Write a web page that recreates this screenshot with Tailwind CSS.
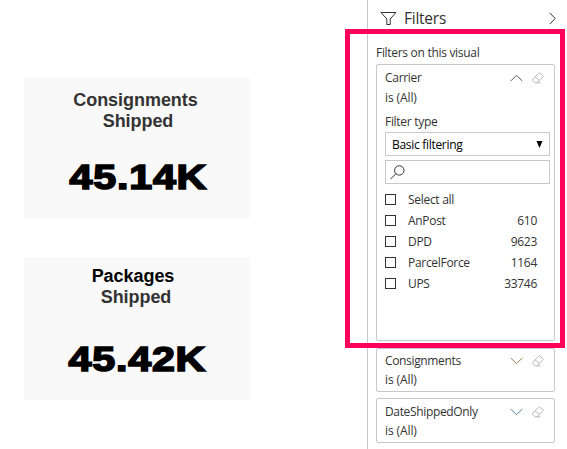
<!DOCTYPE html>
<html lang="en">
<head>
<meta charset="utf-8">
<title>Filters</title>
<script src="https://cdn.jsdelivr.net/npm/@tailwindcss/browser@4"></script>
</head>
<body class="bg-white">
<svg class="hidden">
  <symbol id="eraser" viewBox="0 0 12 12"><path d="M.7 7.3 7.4.7 11.4 4.4 4.9 10.9H3.1L.7 8.6ZM3.2 4.9 7.4 8.6M4.9 10.9H8.6" fill="none" stroke="#a8a6a5" stroke-width=".8" stroke-linejoin="round"/></symbol>
  <symbol id="down" viewBox="0 0 13 8"><path d="M.7 1 6.5 6.6 12.3 1" fill="none" stroke="currentColor" stroke-width="1"/></symbol>
</svg>
<div class="relative flex h-[449px] w-[567px] overflow-hidden bg-white">
  <main class="flex w-[367px] flex-col gap-[38px] pt-[77px] pl-6 font-['Liberation_Sans',Arial,sans-serif] font-bold">
    <section class="flex h-[142px] w-[226px] flex-col items-center bg-[#f9f9f9] pt-[13px] text-[18px] leading-[21px] tracking-[-0.05px] text-[#333]">
      <span class="mr-[3px]">Consignments</span>
      <span class="ml-[2px]">Shipped</span>
      <span class="mt-[25px] ml-[2px] origin-center scale-x-[1.16] text-[35.5px] leading-[40px] tracking-[0.7px] text-black [-webkit-text-stroke:1.7px_black]">45.14K</span>
    </section>
    <section class="flex h-[143px] w-[226px] flex-col items-center bg-[#f9f9f9] pt-[8px] text-[18px] leading-[21px] tracking-[-0.05px] text-[#333]">
      <span class="mt-px mr-[8px] text-black">Packages</span>
      <span class="mr-[2px]">Shipped</span>
      <span class="mt-[31px] ml-[1px] origin-center scale-x-[1.16] text-[35.5px] leading-[40px] tracking-[0.7px] text-black [-webkit-text-stroke:1.7px_black]">45.42K</span>
    </section>
  </main>
  <aside class="flex w-[200px] flex-col border-l border-[#c8c8c8] pr-3 pl-2 font-['Open_Sans','Noto_Sans',sans-serif] text-[12px] leading-[19px] tracking-[-0.3px] text-[#333]">
    <header class="flex h-[36px] shrink-0 items-center pl-[4px]">
      <svg class="h-[15px] w-[17px]" viewBox="0 0 17 15"><path d="M1 1.5H16L10.2 8V13.5H6.8V8Z" fill="none" stroke="#333"/></svg>
      <span class="ml-[7px] text-[15.5px] tracking-[-0.25px]">Filters</span>
      <svg class="ml-auto mr-[-1px] h-[13px] w-[7px]" viewBox="0 0 7 13"><path d="M.7.8 6.2 6.5.7 12.2" fill="none" stroke="#333"/></svg>
    </header>
    <h2 class="mt-[7px] mb-[2px] shrink-0 text-[12px] tracking-[-0.3px]">Filters on this visual</h2>
    <div class="flex w-[179px] shrink-0 flex-col gap-[7px]">
      <section class="h-[277px] rounded-[2px] border border-[#c8c8c8] px-2 pt-[3px]">
        <div class="flex h-[19px] items-center"><span>Carrier</span>
          <svg class="ml-auto h-2 w-[13px] rotate-180 text-[#555]"><use href="#down"/></svg>
          <svg class="mr-[2px] ml-[9px] size-3"><use href="#eraser"/></svg></div>
        <p class="mt-px tracking-[-0.1px]">is (All)</p>
        <p class="mt-[5px]">Filter type</p>
        <div class="mt-[1px] flex h-6 w-[165px] items-center border border-[#c8c8c8] px-[6px] text-black"><span>Basic filtering</span>
          <svg class="ml-auto h-[7px] w-[7px]" viewBox="0 0 7 7"><path d="M.5 0H6.5L3.5 7Z"/></svg></div>
        <div class="mt-1 flex h-6 w-[165px] items-center border border-[#c8c8c8] pl-1">
          <svg class="h-[15px] w-[15px]" viewBox="0 0 15 15"><path d="M.5 14 6 8.7" stroke="#333"/><circle cx="9.3" cy="5.4" r="4.7" fill="none" stroke="#333"/></svg></div>
        <ul class="mt-[5px] leading-[21px]">
          <li class="flex h-[21px] items-center"><i class="mr-3 size-[11px] border border-[#333]"></i>Select all</li>
          <li class="flex h-[21px] items-center"><i class="mr-3 size-[11px] border border-[#333]"></i>AnPost<b class="mr-[9px] ml-auto font-normal">610</b></li>
          <li class="flex h-[21px] items-center"><i class="mr-3 size-[11px] border border-[#333]"></i>DPD<b class="mr-[9px] ml-auto font-normal">9623</b></li>
          <li class="flex h-[21px] items-center"><i class="mr-3 size-[11px] border border-[#333]"></i>ParcelForce<b class="mr-[9px] ml-auto font-normal">1164</b></li>
          <li class="flex h-[21px] items-center"><i class="mr-3 size-[11px] border border-[#333]"></i>UPS<b class="mr-[9px] ml-auto font-normal">33746</b></li>
        </ul>
      </section>
      <section class="-mb-px h-[44px] rounded-[2px] border border-[#c8c8c8] px-2 pt-[2px]">
        <div class="flex h-[19px] items-center"><span class="tracking-[-0.35px]">Consignments</span>
          <svg class="ml-auto h-2 w-[13px] text-[#a67c50]"><use href="#down"/></svg>
          <svg class="mr-[2px] ml-[9px] size-3"><use href="#eraser"/></svg></div>
        <p class="tracking-[-0.1px]">is (All)</p>
      </section>
      <section class="h-[45px] rounded-[2px] border border-[#c8c8c8] px-2 pt-[3px]">
        <div class="flex h-[19px] items-center"><span class="tracking-[-0.35px]">DateShippedOnly</span>
          <svg class="ml-auto h-2 w-[13px] text-[#5a87a5]"><use href="#down"/></svg>
          <svg class="mr-[2px] ml-[9px] size-3"><use href="#eraser"/></svg></div>
        <p class="tracking-[-0.1px]">is (All)</p>
      </section>
    </div>
  </aside>
  <div class="absolute top-[29px] left-[345px] h-[319px] w-[220px] border-5 border-[#ff005a]"></div>
</div>
</body>
</html>
